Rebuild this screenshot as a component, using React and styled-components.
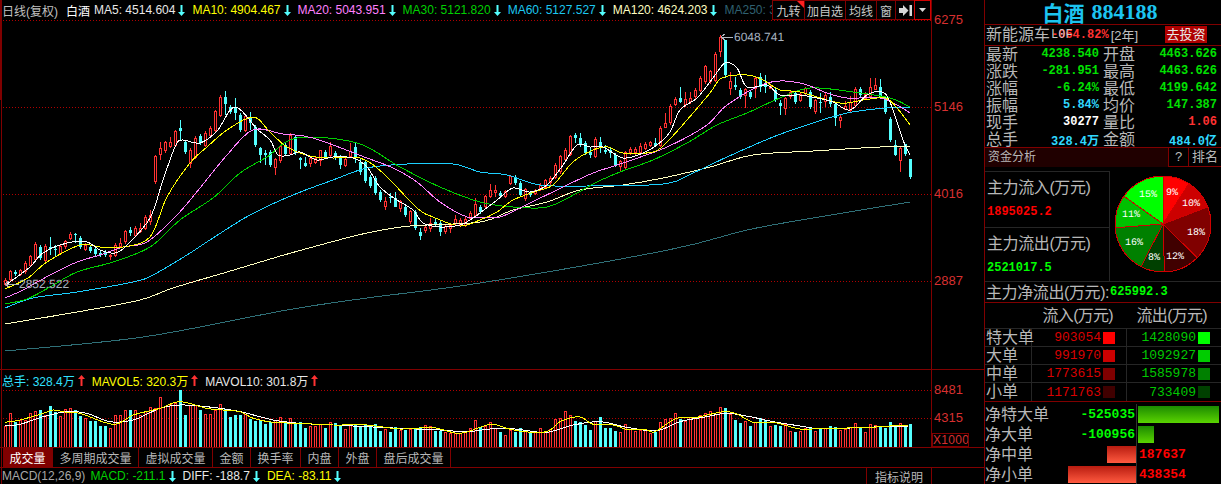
import React from 'react'
import styled, { createGlobalStyle } from 'styled-components'

const CJK = `"Liberation Sans", "Noto Sans CJK SC", sans-serif`
const MONO = `"Liberation Mono", "Noto Sans CJK SC", monospace`
const RED = '#ff3232'
const CYAN = '#54ffff'
const LINE = '#800000'
const DIM = '#262626'

// candle bodies read off the chart: [top, bottom, wickTop, wickBottom]
// first block: y = 130 + v / 3, x = 5, 10, 15 ...
const candlesA = [
  [450,462],[425,448],[425,431],[422,432],[400,425],[380,405],[342,388],[350,385],[348,392],[350,358,322,375],
  [356,360,345,380],[350,370],[335,350],[312,325],[312,316,310,340],[325,350],[345,358],[350,362],[358,372],[370,375],
  [365,375],[376,380,372,390],[345,375],[340,350,325,355],[305,335],[300,310,292,318],[295,315],[295,305,280,310],[262,295],[255,275,240,285],
  [80,155],[55,72,35,90],[38,62],[38,50,20,55],[5,45],[-5,3,-30,30],[35,65],[60,100,55,115],[25,82],[18,40],
  [10,45],[-5,15],[-55,0],[-98,-45],[-100,-78,-118,-45],[-70,-55],[-70,-50,-95,-30],[-45,0],[-40,0],[-40,-20,-55,0],
  [-10,45],[55,75,50,100],[70,75,60,105],[65,105],[88,112,85,135],[50,92],[45,72],[15,70],[22,68],[85,90,80,118],
  [100,108,80,112],[85,100,80,110],[85,97],[62,92,60,108],[65,80],[50,75,35,85],[70,85],[80,105,75,118],[88,105],[65,80,40,85],
  [50,85,40,100],[95,125,85,135],[95,152],[140,167],[145,188],[185,210],[215,230,200,240],[200,205,190,220],[205,230,187,232],[215,235,210,245],
  [230,255],[245,275],[245,295],[305,318,295,330],[292,300,288,310],[280,295,265,305],[275,285,268,290],[280,305,270,318],[290,305],[285,295,280,308],
  [268,280,255,285],[270,285],[268,285],[250,265],[222,255,205,260],
]
// second block: y = 30 + v / 3, x = 480, 485 ...
const candlesB = [
  [530,545],[500,530],[480,498,462,505],[480,486,465,500],[490,498],[485,498],[440,460],[442,458],[460,495],[478,505,475,512],
  [490,495],[482,490],[465,478],[452,472],[445,458],[405,442],[380,425],[360,388],[320,372],[315,325,310,340],
  [325,345,310,350],[340,370],[365,375,355,385],[328,378],[335,350,322,370],[360,365,345,372],[360,368,352,385],[375,405],[395,410,390,425],[368,412],
  [358,368],[358,368],[350,368,340,372],[342,355],[338,345],[340,348,325,350],[295,345],[280,292,250,295],[228,278],[208,222],
  [205,215,172,220],[208,222,185,230],[205,215,185,222],[180,200],[145,180],[110,155],[125,155],[72,150],[22,65,15,80],[30,135,30,145],
  [155,175,125,195],[165,170,140,180],[180,200],[178,195,175,235],[185,200],[145,175,138,205],[140,170,128,185],[160,170,135,190],[170,175,165,178],[180,210],
  [220,228,210,255],[205,235,200,255],[188,200],[190,215],[193,210],[175,190,170,195],[185,232],[212,245],[215,220,190,250],[195,215,185,230],
  [200,222,185,230],[222,265,222,288],[262,270,255,293],[230,237,212,240],[218,240,198,245],[178,225,170,228],[178,195,170,200],[192,205],[172,200,145,205],[165,178,145,180],
  [172,200,148,205],[205,245],[268,330],[345,375,330,378],[355,392,352,425],[342,372,342,378],[388,440,388,447],
]
const candles = [
  ...candlesA.map(c => c.map(v => 130 + v / 3)),
  ...candlesB.map(c => c.map(v => 30 + v / 3)),
]

// volume bar tops, y = 365 + v / 3, c = falling day
const volumes = [
  '185r 145r 170c 165r 165r 145r 138r 135c 150r 123c 140c 155r 132r 130r 135c 152c 160r 168c 168c 183c',
  '183c 190r 150r 152r 135r 135c 135r 150r 140r 128r 130r 97r 125r 118r 115r 75c 150c 122r 122r 135c',
  '147r 147r 135r 118r 132c 155c 150c 150c 148r 162c 168c 165c 178c 170c 165r 157r 172c 160r 178c 172c',
  '190c 183r 183r 178r 190c 172r 175c 180c 192r 180r 178c 185c 178c 183c 178c 198c 192r 200c 185c 195r',
  '195c 192r 190c 187c 180r 185r 197c 197c 203r 205r 205r 205r 200r 190r 165r 185c 185r 172r 190r 200c',
  '210r 195r 200c 190c 200r 205c 200r 190r 203r 193r 162r 160r 138r 150r 168c 172c 180c 195c 168r 157c',
  '188c 188c 198c 202r 178r 192r 200r 195r 195r 205r 200c 172r 162r 160r 145r 162c 170r 158r 158r 150r',
  '145r 138r 148r 127r 130c 147r 165c 175c 168r 183c 172r 158c 165c 183r 180c 183c 178r 198r 202c 198r',
  '190r 187c 198r 192c 190r 183c 187c 195r 192r 187r 175r 190c 202r 178r 180r 183c 188c 172c 183c 175r',
  '183c 177c',
].join(' ').split(' ').map(s => ({ top: 365 + parseInt(s) / 3, down: s.endsWith('c') }))

const maLines = [
  { color: '#2f7078', pts: [[5,351],[143,337],[287,310],[367,298],[480,283],[668,250],[747,230],[813,218],[910,202]] },
  { color: '#ffffc0', pts: [[5,324],[77,312],[140,300],[173,288],[227,272],[277,257],[320,245],[367,233],[410,226],[480,222],[513,210],[547,202],[580,190],[623,185],[663,178],[710,167],[753,155],[813,151],[880,147],[910,147]] },
  { color: '#1cd0ff', pts: [[5,308],[33,298],[77,292],[133,282],[153,275],[187,255],[213,238],[250,215],[293,195],[333,180],[367,168],[407,164],[453,164],[480,172],[507,175],[540,185],[587,186],[663,184],[693,173],[727,157],[773,137],[813,123],[847,113],[885,108],[910,107]] },
  { color: '#00d000', pts: [[5,304],[27,299],[50,287],[77,272],[113,262],[150,247],[180,220],[213,198],[240,173],[267,157],[297,138],[357,143],[400,167],[440,187],[480,202],[513,207],[547,207],[577,193],[597,182],[620,172],[653,160],[687,143],[717,125],[747,113],[780,98],[810,88],[853,92],[890,98],[910,107]] },
  { color: '#ff80ff', pts: [[5,298],[23,290],[50,275],[77,262],[100,255],[123,247],[147,242],[177,215],[200,188],[227,155],[253,130],[283,134],[313,138],[367,158],[393,168],[417,182],[440,202],[467,217],[480,217],[500,217],[530,203],[563,187],[593,173],[617,165],[667,147],[707,125],[727,105],[767,83],[800,83],[827,93],[847,98],[880,98],[897,105],[910,113]] },
  { color: '#ffff00', pts: [[5,289],[28,278],[47,262],[80,245],[100,247],[123,247],[150,237],[167,197],[190,163],[207,147],[227,130],[253,117],[270,132],[287,147],[310,156],[333,158],[360,158],[383,173],[417,208],[433,217],[460,226],[480,220],[497,212],[513,200],[537,191],[553,185],[573,162],[593,150],[608,147],[623,153],[653,152],[667,142],[687,120],[710,93],[722,78],[747,75],[763,80],[780,90],[800,92],[840,103],[863,100],[885,98],[897,108],[910,125]] },
  { color: '#ffffff', pts: [[7,284],[30,267],[43,253],[67,243],[87,242],[100,250],[115,253],[127,245],[150,218],[163,180],[175,147],[182,140],[200,143],[217,131],[235,107],[257,129],[270,140],[278,155],[290,155],[300,152],[317,160],[333,157],[353,158],[367,167],[380,187],[397,200],[413,210],[423,223],[440,227],[460,225],[473,218],[480,213],[497,200],[513,188],[530,192],[547,185],[563,165],[577,145],[590,147],[603,147],[623,158],[643,153],[657,145],[670,132],[680,110],[697,98],[713,78],[725,63],[737,68],[747,87],[767,85],[780,95],[800,95],[817,98],[833,102],[850,110],[867,95],[882,92],[890,102],[903,140],[910,155]] },
]

const volPoint = ([x, y]) => [x / 3, 365 + y / 3]
const volPointB = ([x, y]) => [490 + x / 3, 365 + y / 3]
const volLines = [
  { color: '#ffffff', pts: [
    ...[[15,182],[60,178],[130,155],[200,140],[260,145],[330,170],[400,165],[480,130],[540,120],[620,125],[720,140],[820,165],[900,175],[1000,180],[1200,190],[1320,195],[1400,200]].map(volPoint),
    ...[[0,192],[50,190],[100,195],[170,202],[250,180],[330,170],[410,187],[500,197],[570,170],[650,155],[710,145],[780,155],[850,170],[930,183],[1000,192],[1120,187],[1200,185],[1255,183]].map(volPointB),
  ] },
  { color: '#ffff00', pts: [
    ...[[15,172],[60,165],[130,145],[160,135],[200,142],[240,145],[340,178],[400,150],[480,130],[540,110],[620,130],[670,135],[720,140],[760,160],[820,172],[900,175],[1000,180],[1100,180],[1200,192],[1300,188],[1380,205]].map(volPoint),
    ...[[0,178],[50,190],[100,200],[170,200],[210,170],[250,157],[275,157],[310,178],[370,180],[410,193],[470,195],[495,200],[560,160],[620,157],[700,140],[740,147],[790,172],[850,172],[930,192],[1000,190],[1120,188],[1200,183],[1255,180]].map(volPointB),
  ] },
]

// catmull-rom through the read-off points
const smooth = pts => {
  let d = `M${pts[0][0]} ${pts[0][1]}`
  for (let i = 0; i < pts.length - 1; i++) {
    const p0 = pts[i - 1] || pts[i]
    const p1 = pts[i]
    const p2 = pts[i + 1]
    const p3 = pts[i + 2] || p2
    const c1 = [p1[0] + (p2[0] - p0[0]) / 6, p1[1] + (p2[1] - p0[1]) / 6]
    const c2 = [p2[0] - (p3[0] - p1[0]) / 6, p2[1] - (p3[1] - p1[1]) / 6]
    d += ` C${c1[0].toFixed(1)} ${c1[1].toFixed(1)} ${c2[0].toFixed(1)} ${c2[1].toFixed(1)} ${p2[0]} ${p2[1]}`
  }
  return d
}

const pieSlices = [
  { pct: 9, color: '#ff0000', label: [59, 18] },
  { pct: 10, color: '#cc0000', label: [78, 29] },
  { pct: 18, color: '#800000', label: [83, 58] },
  { pct: 12, color: '#400000', label: [62, 82] },
  { pct: 8, color: '#004000', label: [41, 83] },
  { pct: 16, color: '#008000', label: [21, 68] },
  { pct: 11, color: '#00c000', label: [18, 40] },
  { pct: 15, color: '#00ff00', label: [35, 20] },
]

const GlobalStyle = createGlobalStyle`
  html, body { margin: 0; padding: 0; background: #000; overflow: hidden; }
  * { box-sizing: border-box; }
`

function Arrow({ up }) {
  return (
    <ArrowIcon width="7" height="11" viewBox="0 0 7 11">
      <path d={up ? 'M2.5 11V4H0L3.5 0 7 4H4.5v7z' : 'M2.5 0v7H0l3.5 4L7 7H4.5V0z'} fill={up ? RED : CYAN} />
    </ArrowIcon>
  )
}

function LegendEntry({ color, text, up }) {
  return (
    <Entry $color={color}>
      {text}
      <Arrow up={up} />
    </Entry>
  )
}

function MainChart() {
  return (
    <ChartSvg width="931" height="349" viewBox="0 20 931 349" shapeRendering="crispEdges">
      {[20, 107, 194, 281].map(y => (
        <line key={y} x1="3" x2="931" y1={y + 0.5} y2={y + 0.5} stroke="#b00000" strokeDasharray="1 2" />
      ))}
      {candles.map((c, i) => {
        const x = 5 + i * 5
        const down = volumes[i].down
        const color = down ? CYAN : RED
        const wickTop = c[2] ?? c[0] - 2
        const wickBottom = c[3] ?? c[1] + 2
        return (
          <g key={i}>
            <rect x={x} y={wickTop} width="1" height={wickBottom - wickTop} fill={color} />
            {down
              ? <rect x={x - 1} y={c[0]} width="3" height={c[1] - c[0]} fill={color} />
              : <rect x={x - 0.5} y={c[0]} width="2" height={c[1] - c[0]} fill="#000" stroke={color} />}
          </g>
        )
      })}
      {maLines.map(l => <path key={l.color} d={smooth(l.pts)} fill="none" stroke={l.color} />)}
      <path d="M721 37h12M725 34l-4 3 4 3" fill="none" stroke="#b0b8c0" />
      <ChartNote x="734" y="41">6048.741</ChartNote>
      <path d="M5 284h14M9 281l-4 3 4 3" fill="none" stroke="#b0b8c0" />
      <ChartNote x="19" y="288">2852.522</ChartNote>
    </ChartSvg>
  )
}

function VolumeChart() {
  return (
    <ChartSvg width="931" height="57" viewBox="0 390 931 57" shapeRendering="crispEdges">
      {[390, 418].map(y => (
        <line key={y} x1="3" x2="931" y1={y + 0.5} y2={y + 0.5} stroke="#b00000" strokeDasharray="1 2" />
      ))}
      {volumes.map((v, i) => {
        const x = 5 + i * 5
        return v.down
          ? <rect key={i} x={x - 1} y={v.top} width="3" height={447 - v.top} fill={CYAN} />
          : <rect key={i} x={x - 0.5} y={v.top} width="2" height={448 - v.top} fill="#000" stroke={RED} />
      })}
      {volLines.map(l => <path key={l.color} d={smooth(l.pts)} fill="none" stroke={l.color} />)}
    </ChartSvg>
  )
}

function FlowPie() {
  let angle = 0
  const cx = 50
  const cy = 50
  const r = 48
  return (
    <svg width="100" height="100" viewBox="0 0 100 100" shapeRendering="crispEdges">
      {pieSlices.map(s => {
        const a0 = angle
        angle += (s.pct / 99) * Math.PI * 2
        const p0 = [cx + r * Math.sin(a0), cy - r * Math.cos(a0)]
        const p1 = [cx + r * Math.sin(angle), cy - r * Math.cos(angle)]
        const large = angle - a0 > Math.PI ? 1 : 0
        return (
          <path
            key={s.pct}
            d={`M${cx} ${cy}L${p0[0]} ${p0[1]}A${r} ${r} 0 ${large} 1 ${p1[0]} ${p1[1]}Z`}
            fill={s.color}
            stroke="#d00000"
          />
        )
      })}
      {pieSlices.map(s => (
        <PieLabel key={s.pct} x={s.label[0]} y={s.label[1] + 3} textAnchor="middle">{s.pct}%</PieLabel>
      ))}
    </svg>
  )
}

const quotes = [
  ['最新', '4238.540', '#00e000', '开盘', '4463.626', '#00e000'],
  ['涨跌', '-281.951', '#00e000', '最高', '4463.626', '#00e000'],
  ['涨幅', '-6.24%', '#00e000', '最低', '4199.642', '#00e000'],
  ['振幅', '5.84%', '#30d8ff', '均价', '147.387', '#00e000'],
  ['现手', '30277', '#ffffff', '量比', '1.06', RED],
  ['总手', '328.4万', '#30d8ff', '金额', '484.0亿', '#30d8ff'],
]

const flows = [
  ['特大单', '903054', '#ff0000', '1428090', '#00ff00'],
  ['大单', '991970', '#cc0000', '1092927', '#00cc00'],
  ['中单', '1773615', '#800000', '1585978', '#008000'],
  ['小单', '1171763', '#400000', '733409', '#004000'],
]

const tabs = ['成交量', '多周期成交量', '虚拟成交量', '金额', '换手率', '内盘', '外盘', '盘后成交量']
const tabWidths = [50, 86, 74, 38, 50, 38, 38, 74]

export default function App() {
  return (
    <Page>
      <GlobalStyle />
      <Left>
        <Section $height={370}>
          <Plot>
            <TopBar>
              <Legend>
                <Entry $color="#c0c0c0" $after={1}><Cjk>日线(复权)</Cjk></Entry>
                <Entry $color="#ffffff" $after={-3}><Cjk>白酒</Cjk></Entry>
                <LegendEntry color="#e8e8e8" text="MA5: 4514.604" />
                <LegendEntry color="#ffff00" text="MA10: 4904.467" />
                <LegendEntry color="#ff80ff" text="MA20: 5043.951" />
                <LegendEntry color="#00d000" text="MA30: 5121.820" />
                <LegendEntry color="#1cc8f0" text="MA60: 5127.527" />
                <LegendEntry color="#ffffc0" text="MA120: 4624.203" />
                <Entry $color="#2f6070">MA250: 3</Entry>
              </Legend>
              <Toolbar>
                <ToolButton $width={32}>九转<Corner /></ToolButton>
                <ToolButton $width={41}>加自选</ToolButton>
                <ToolButton $width={31}>均线</ToolButton>
                <ToolButton $width={19}>窗</ToolButton>
                <ToolButton $width={19}>
                  <svg width="13" height="11" viewBox="0 0 13 11">
                    <path d="M0 3h4V0l5.500 5.500L4 11V8H0zM10.500 0H13v11h-2.500z" fill="#d8d8d8" />
                  </svg>
                </ToolButton>
                <ToolButton $width={17} $active>
                  <svg width="7" height="4" viewBox="0 0 7 4"><path d="M0 0h7L3.500 4z" fill="#d8d8d8" /></svg>
                </ToolButton>
              </Toolbar>
            </TopBar>
            <MainChart />
          </Plot>
          <Axis $gap={73}>
            <AxisLabel>6275</AxisLabel>
            <AxisLabel>5146</AxisLabel>
            <AxisLabel>4016</AxisLabel>
            <AxisLabel>2887</AxisLabel>
          </Axis>
        </Section>

        <Section $height={78}>
          <Plot>
            <TopBar>
              <Legend>
                <LegendEntry color="#30e0ff" text={<Cjk>总手: 328.4万</Cjk>} up />
                <LegendEntry color="#ffff00" text={<Cjk>MAVOL5: 320.3万</Cjk>} up />
                <LegendEntry color="#e8e8e8" text={<Cjk>MAVOL10: 301.8万</Cjk>} up />
              </Legend>
            </TopBar>
            <VolumeChart />
          </Plot>
          <Axis $gap={14}>
            <AxisLabel>8481</AxisLabel>
            <AxisLabel>4315</AxisLabel>
            <ScaleBox>X1000</ScaleBox>
          </Axis>
        </Section>

        <TabRow>
          {tabs.map((t, i) => (
            <Tab key={t} $width={tabWidths[i]} $active={i === 0}>{t}</Tab>
          ))}
        </TabRow>

        <BottomRow>
          <BottomPlot>
            <Legend>
              <Entry $color="#a8a8a8" $after={-2}>MACD(12,26,9)</Entry>
              <LegendEntry color="#00d000" text="MACD: -211.1" />
              <LegendEntry color="#e8e8e8" text="DIFF: -188.7" />
              <LegendEntry color="#ffff00" text="DEA: -83.11" />
            </Legend>
            <HelpCell>指标说明</HelpCell>
          </BottomPlot>
        </BottomRow>
      </Left>

      <Right>
        <Title>白酒<TitleCode>884188</TitleCode></Title>

        <InfoBar>
          <Label>新能源车</Label>
          <Change>
            -064.82%
            <ChangeOverlay>L0F</ChangeOverlay>
          </Change>
          <Term>[2年]</Term>
          <InvestButton>去投资</InvestButton>
        </InfoBar>

        <QuoteGrid>
          {quotes.map(q => (
            <React.Fragment key={q[0]}>
              <Label>{q[0]}</Label>
              <Num $color={q[2]}>{q[1]}</Num>
              <SecondLabel>{q[3]}</SecondLabel>
              <Num $color={q[5]}>{q[4]}</Num>
            </React.Fragment>
          ))}
        </QuoteGrid>

        <AnalysisBar>
          <AnalysisTitle>资金分析</AnalysisTitle>
          <AnalysisCell $width={20}>?</AnalysisCell>
          <AnalysisCell $width={33}>排名</AnalysisCell>
        </AnalysisBar>

        <FundBlock>
          <FundList>
            <FundCell $height={56}>
              <Label $tight>主力流入(万元)</Label>
              <FundValue $color="#ff0000">1895025.2</FundValue>
            </FundCell>
            <FundCell $height={54}>
              <Label $tight>主力流出(万元)</Label>
              <FundValue $color="#00ff00">2521017.5</FundValue>
            </FundCell>
          </FundList>
          <PieBox><FlowPie /></PieBox>
        </FundBlock>

        <NetRow>
          <Label $tight>主力净流出(万元):</Label>
          <FundValue $color="#00ff00">625992.3</FundValue>
        </NetRow>

        <FlowHead>
          <FlowHeadCell $width={142}>流入(万元)</FlowHeadCell>
          <FlowHeadCell $width={94}>流出(万元)</FlowHeadCell>
        </FlowHead>

        <FlowTable>
          {flows.map(f => (
            <FlowRow key={f[0]}>
              <FlowLabel>{f[0]}</FlowLabel>
              <FlowCell $color="#d80000" $width={95}>{f[1]}<Swatch $color={f[2]} /></FlowCell>
              <FlowCell $color="#00c800" $width={94}>{f[3]}<Swatch $color={f[4]} /></FlowCell>
            </FlowRow>
          ))}
        </FlowTable>

        <NetTable>
          <NetFlow label="净特大单" value="-525035" bar={81} />
          <NetFlow label="净大单" value="-100956" bar={16} />
          <NetFlow label="净中单" value="187637" bar={29} inflow />
          <NetFlow label="净小单" value="438354" bar={68} inflow />
        </NetTable>
      </Right>
    </Page>
  )
}

function NetFlow({ label, value, bar, inflow }) {
  return (
    <NetLine>
      <NetLeft>
        <Label>{label}</Label>
        {inflow
          ? <NetBar $width={bar} $inflow />
          : <NetValue $color="#00ff00">{value}</NetValue>}
      </NetLeft>
      <NetRight>
        {inflow
          ? <NetValue $color="#ff0000">{value}</NetValue>
          : <NetBar $width={bar} />}
      </NetRight>
    </NetLine>
  )
}

const Page = styled.div`
  width: 1221px;
  height: 484px;
  display: flex;
  background: #000;
  overflow: hidden;
  font-family: ${CJK};
`

const Left = styled.div`
  position: relative;
  width: 985px;
  flex: none;
  border-right: 1px solid ${LINE};

  &::before {
    content: '';
    position: absolute;
    left: 1px;
    top: 0;
    bottom: 0;
    width: 1px;
    background: ${LINE};
    z-index: 2;
  }

  &::after {
    content: '';
    position: absolute;
    left: 0;
    top: 0;
    height: 100px;
    width: 1px;
    background: ${LINE};
    z-index: 2;
  }
`

const Section = styled.div`
  height: ${p => p.$height}px;
  display: flex;
  border-bottom: 1px solid ${LINE};
`

const Plot = styled.div`
  width: 932px;
  flex: none;
  border-right: 1px solid ${LINE};
`

const TopBar = styled.div`
  height: 20px;
  display: flex;
`

const Legend = styled.div`
  flex: 1;
  min-width: 0;
  display: flex;
  align-items: center;
  gap: 7px;
  padding: 0 0 0 2px;
  overflow: hidden;
  white-space: nowrap;
  font-size: 12px;
`

const Entry = styled.span`
  display: inline-flex;
  align-items: center;
  gap: 3px;
  flex: none;
  color: ${p => p.$color};
  margin-right: ${p => p.$after || 0}px;
`

const Cjk = styled.span`
  font-family: ${CJK};
`

const ArrowIcon = styled.svg`
  display: block;
  flex: none;
`

const Toolbar = styled.div`
  display: flex;
  flex: none;
  height: 20px;
`

const ToolButton = styled.div`
  position: relative;
  width: ${p => p.$width}px;
  height: 20px;
  display: flex;
  align-items: center;
  justify-content: center;
  font-size: 12px;
  color: #c8c8c8;
  border: 1px solid ${p => (p.$active ? '#d00000' : LINE)};
  border-right: ${p => (p.$active ? '1px solid #d00000' : 'none')};
  white-space: nowrap;
`

const Corner = styled.i`
  position: absolute;
  top: 0;
  right: 0;
  border-top: 7px solid #ff2020;
  border-left: 7px solid transparent;
`

const ChartSvg = styled.svg`
  display: block;
`

const ChartNote = styled.text`
  font-family: ${CJK};
  font-size: 12px;
  fill: #a8b4c0;
  text-rendering: geometricPrecision;
`

const Axis = styled.div`
  flex: 1;
  display: flex;
  flex-direction: column;
  align-items: flex-start;
  gap: ${p => p.$gap}px;
  padding-top: 13px;
`

const AxisLabel = styled.div`
  height: 14px;
  line-height: 14px;
  padding-left: 2px;
  font-size: 13px;
  color: #d83030;
`

const ScaleBox = styled.div`
  width: 37px;
  height: 14px;
  line-height: 12px;
  margin-top: -6px;
  border: 1px solid ${LINE};
  font-size: 12px;
  letter-spacing: 0.3px;
  color: #d83030;
  white-space: nowrap;
  overflow: hidden;
`

const TabRow = styled.div`
  height: 20px;
  display: flex;
  padding-left: 3px;
  border-bottom: 1px solid ${LINE};
`

const Tab = styled.div`
  width: ${p => p.$width}px;
  display: flex;
  align-items: center;
  justify-content: center;
  font-size: 12px;
  color: ${p => (p.$active ? '#fff' : '#b8b8b8')};
  background: ${p => (p.$active ? LINE : 'transparent')};
  border-right: 1px solid ${LINE};
  white-space: nowrap;
`

const BottomRow = styled.div`
  height: 16px;
  overflow: hidden;
`

const BottomPlot = styled.div`
  width: 932px;
  height: 16px;
  display: flex;
  border-right: 1px solid ${LINE};
`

const HelpCell = styled.div`
  width: 65px;
  flex: none;
  padding: 3px 0 0 8px;
  border-left: 1px solid ${LINE};
  font-size: 12px;
  line-height: 14px;
  color: #b8b8b8;
  white-space: nowrap;
`

const Right = styled.div`
  flex: 1;
  min-width: 0;
  display: flex;
  flex-direction: column;
`

const Title = styled.div`
  height: 24px;
  display: flex;
  align-items: center;
  justify-content: center;
  gap: 7px;
  padding-right: 6px;
  font-size: 21px;
  font-weight: 700;
  color: #1cc4f0;
  white-space: nowrap;
`

const TitleCode = styled.span`
  font-family: "Liberation Serif", serif;
  font-size: 22px;
`

const InfoBar = styled.div`
  height: 22px;
  display: flex;
  align-items: center;
  padding-left: 1px;
  border-top: 1px solid ${LINE};
  border-bottom: 1px solid ${LINE};
`

const Label = styled.span`
  font-size: 16px;
  line-height: 17px;
  color: #b8b8b8;
  white-space: nowrap;
  letter-spacing: ${p => (p.$tight ? '-0.4px' : '0')};
`

const SecondLabel = styled(Label)`
  margin-left: 4px;
`

const Change = styled.span`
  position: relative;
  margin-left: 1px;
  font-family: ${MONO};
  font-size: 12px;
  font-weight: 700;
  color: ${RED};
`

const ChangeOverlay = styled.span`
  position: absolute;
  left: 0;
  top: 0;
  color: #c8c8c8;
  font-weight: 400;
`

const Term = styled.span`
  margin-left: 2px;
  font-size: 13px;
  color: #c0c0c0;
  white-space: nowrap;
`

const InvestButton = styled.div`
  width: 42px;
  height: 17px;
  line-height: 17px;
  margin-left: auto;
  margin-right: 14px;
  text-align: center;
  font-size: 13px;
  color: #e8e8e8;
  background: #b00000;
`

const QuoteGrid = styled.div`
  height: 101px;
  display: grid;
  grid-template-columns: 33px 80px 37px 81px;
  grid-auto-rows: 1fr;
  align-items: center;
  padding-left: 1px;
`

const Num = styled.span`
  text-align: right;
  font-family: ${MONO};
  font-size: 12px;
  font-weight: 700;
  color: ${p => p.$color};
  white-space: nowrap;
`

const AnalysisBar = styled.div`
  height: 20px;
  display: flex;
  background: #200000;
  border-top: 1px solid ${LINE};
`

const AnalysisTitle = styled.div`
  flex: 1;
  padding-left: 3px;
  font-size: 12px;
  line-height: 18px;
  color: #b8b8b8;
`

const AnalysisCell = styled.div`
  width: ${p => p.$width}px;
  text-align: center;
  font-size: 13px;
  line-height: 18px;
  color: #b8b8b8;
  background: #000;
  border-left: 1px solid ${LINE};
  border-bottom: 1px solid ${LINE};
`

const FundBlock = styled.div`
  height: 115px;
  display: flex;
  padding-top: 4px;
  border-bottom: 1px solid ${DIM};
`

const FundList = styled.div`
  width: 125px;
  flex: none;
  border-right: 1px solid ${DIM};
`

const FundCell = styled.div`
  height: ${p => p.$height}px;
  display: flex;
  flex-direction: column;
  gap: 9px;
  padding: 7px 0 0 2px;
  border-top: 1px solid ${DIM};
`

const FundValue = styled.span`
  font-family: ${MONO};
  font-size: 12px;
  line-height: 15px;
  font-weight: 700;
  color: ${p => p.$color};
`

const PieBox = styled.div`
  flex: 1;
  display: flex;
  justify-content: center;
  padding: 3px 5px 0 0;
`

const PieLabel = styled.text`
  font-family: ${MONO};
  font-size: 10px;
  fill: #fff;
  text-rendering: geometricPrecision;
`

const NetRow = styled.div`
  height: 22px;
  display: flex;
  align-items: center;
  padding-left: 1px;
  gap: 1px;
  border-bottom: 1px solid ${LINE};
`

const FlowHead = styled.div`
  height: 26px;
  display: flex;
  border-bottom: 1px solid ${DIM};
`

const FlowHeadCell = styled.div`
  width: ${p => p.$width}px;
  padding-right: 14px;
  padding-top: 4px;
  text-align: right;
  font-size: 16px;
  line-height: 17px;
  letter-spacing: -0.7px;
  color: #b8b8b8;
  white-space: nowrap;
`

const FlowTable = styled.div`
  height: 73px;
  display: grid;
  grid-auto-rows: 1fr;
  border-bottom: 1px solid ${LINE};
`

const FlowRow = styled.div`
  display: flex;
  align-items: stretch;
  border-bottom: 1px solid ${DIM};

  &:last-child {
    border-bottom: none;
  }
`

const FlowLabel = styled.div`
  width: 47px;
  padding-left: 1px;
  font-size: 16px;
  line-height: 17px;
  color: #b8b8b8;
  white-space: nowrap;
  border-right: 1px solid ${DIM};
`

const FlowCell = styled.div`
  width: ${p => p.$width}px;
  display: flex;
  align-items: center;
  justify-content: flex-end;
  gap: 2px;
  padding-right: 11px;
  font-family: ${MONO};
  font-size: 13px;
  color: ${p => p.$color};
  border-right: 1px solid ${DIM};

  &:last-child {
    border-right: none;
  }
`

const Swatch = styled.i`
  width: 12px;
  height: 12px;
  flex: none;
  background: ${p => p.$color};
`

const NetTable = styled.div`
  flex: 1;
  display: grid;
  grid-auto-rows: 20px;
  padding-top: 2px;
`

const NetLine = styled.div`
  display: flex;
  height: 20px;
  align-items: center;
`

const NetLeft = styled.div`
  width: 152px;
  height: 100%;
  display: flex;
  align-items: center;
  justify-content: space-between;
  border-right: 1px solid #303030;
`

const NetRight = styled.div`
  flex: 1;
  display: flex;
  align-items: center;
  padding-left: 1px;
`

const NetValue = styled.span`
  font-family: ${MONO};
  font-size: 13px;
  font-weight: 700;
  padding: 0 1px;
  color: ${p => p.$color};
`

const NetBar = styled.div`
  width: ${p => p.$width}px;
  height: 17px;
  background: ${p => (p.$inflow
    ? 'linear-gradient(#b81c10, #ff5a40)'
    : 'linear-gradient(#1c8a00, #5ad400)')};
`
